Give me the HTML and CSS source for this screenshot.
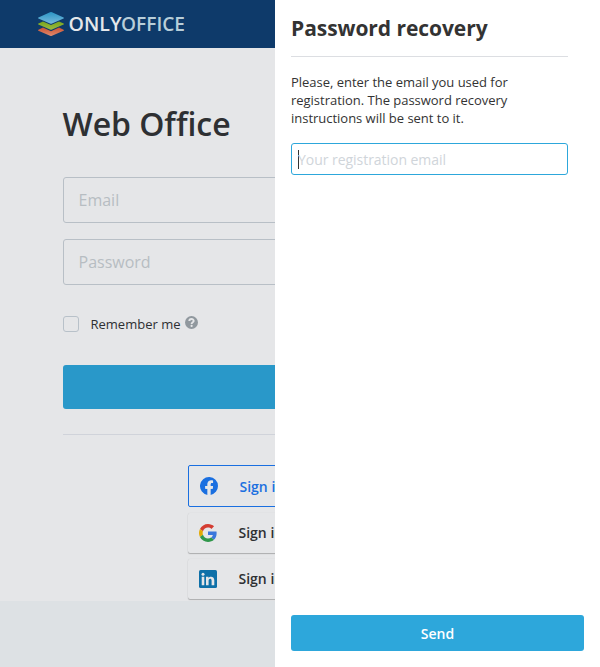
FILE: index.html
```html
<!DOCTYPE html>
<html lang="en">
<head>
<meta charset="utf-8">
<title>Web Office</title>
<link rel="stylesheet" href="styles.css">
</head>
<body>
<div class="app">
  <div class="page">
    <header class="header">
      <svg class="logo" width="150" height="28" viewBox="0 0 150 28">
        <defs>
          <linearGradient id="blue" x1="0" y1="0" x2="0" y2="1"><stop offset="0" stop-color="#2b95c5"/><stop offset="1" stop-color="#78bbdc"/></linearGradient>
          <linearGradient id="green" x1="0" y1="0" x2="0" y2="1"><stop offset="0" stop-color="#78a51d"/><stop offset="1" stop-color="#9dbb42"/></linearGradient>
          <linearGradient id="red" x1="0" y1="0" x2="0" y2="1"><stop offset="0" stop-color="#cc5332"/><stop offset="1" stop-color="#df8b70"/></linearGradient>
        </defs>
        <path fill="url(#red)" d="M1.4 19.7 6 17.600l8 3.700 8-3.700 4.600 2.100q.8.500 0 1L15 25.800q-1 .5-2 0L1.400 20.700q-.8-.5 0-1z"/>
        <path fill="url(#green)" d="M1.400 13.500 6 11.400l8 3.700 8-3.700 4.600 2.100q.8.500 0 1L15 19.600q-1 .5-2 0L1.400 14.500q-.8-.5 0-1z"/>
        <path fill="url(#blue)" d="M1.400 7.400 13 2.300q1-.5 2 0l11.600 5.100q.8.500 0 1L15 13.500q-1 .5-2 0L1.400 8.400q-.8-.5 0-1z"/>
        <text class="logo-only" x="31.500" y="21.300" textLength="53" lengthAdjust="spacingAndGlyphs">ONLY</text>
        <text class="logo-office" x="84" y="21.300" textLength="64" lengthAdjust="spacingAndGlyphs">OFFICE</text>
      </svg>
    </header>
    <main class="login">
      <h1 class="title">Web Office</h1>
      <div class="field">Email</div>
      <div class="field">Password</div>
      <div class="remember">
        <span class="checkbox"></span>
        <span>Remember me</span>
        <svg class="help" width="13" height="13" viewBox="0 0 13 13"><circle cx="6.500" cy="6.500" r="6.500" fill="#90989e"/><path d="M4.300 5.100C4.300 2.300 8.700 2.400 8.700 4.900 8.700 6.300 6.600 6.200 6.600 7.900" fill="none" stroke="#e5e6e8" stroke-width="1.900"/><circle cx="6.600" cy="9.900" r="1.100" fill="#e5e6e8"/></svg>
      </div>
      <div class="signin"></div>
      <div class="socials">
        <div class="social facebook">
          <svg width="18" height="18" viewBox="0 0 24 24"><path fill="#1a6fe0" d="M24 12a12 12 0 1 0-13.900 11.900v-8.400H7.100V12h3V9.400c0-3 1.800-4.700 4.600-4.700 1.300 0 2.700.2 2.700.2v3h-1.500c-1.500 0-2 .9-2 1.900V12h3.400l-.5 3.500h-2.900v8.400A12 12 0 0 0 24 12z"/><path fill="#e5e6e8" d="m16.800 15.500.5-3.500h-3.400V9.800c0-1 .5-1.900 2-1.900h1.500v-3s-1.400-.2-2.700-.2c-2.800 0-4.600 1.700-4.600 4.700V12h-3v3.500h3v8.400a12 12 0 0 0 3.800 0v-8.400z"/></svg>
          <span>Sign in with Facebook</span>
        </div>
        <div class="social">
          <svg width="18" height="18" viewBox="0 0 48 48"><path fill="#d43d32" d="M24 9.500c3.540 0 6.710 1.220 9.210 3.600l6.850-6.850C35.900 2.380 30.470 0 24 0 14.620 0 6.510 5.380 2.560 13.220l7.980 6.190C12.430 13.720 17.740 9.500 24 9.500z"/><path fill="#3b77dc" d="M46.980 24.550c0-1.570-.15-3.090-.38-4.550H24v9.020h12.940c-.58 2.960-2.260 5.480-4.780 7.180l7.730 6c4.510-4.180 7.090-10.360 7.090-17.650z"/><path fill="#e2a904" d="M10.530 28.590c-.48-1.450-.76-2.990-.76-4.590s.27-3.140.76-4.590l-7.980-6.190C.92 16.460 0 20.120 0 24s.92 7.540 2.560 10.780l7.970-6.190z"/><path fill="#2f974b" d="M24 48c6.480 0 11.930-2.130 15.890-5.810l-7.730-6c-2.150 1.450-4.920 2.300-8.160 2.300-6.260 0-11.570-4.220-13.470-9.910l-7.980 6.190C6.510 42.620 14.620 48 24 48z"/></svg>
          <span>Sign in with Google</span>
        </div>
        <div class="social">
          <svg width="18" height="18" viewBox="0 0 18 18"><rect width="18" height="18" rx="1.500" fill="#0e70a8"/><path fill="#e5e6e8" d="M2.700 6.800h2.600v8.500H2.700zM7 6.800h2.500V8c1-2 5.800-2.100 5.800 2.200v5.100h-2.700v-4.500c0-2.700-3-2.500-3 0v4.500H7z"/><circle cx="4" cy="4.200" r="1.500" fill="#e5e6e8"/></svg>
          <span>Sign in with LinkedIn</span>
        </div>
      </div>
    </main>
  </div>
  <aside class="panel">
    <h2 class="panel-title">Password recovery</h2>
    <p class="panel-text">Please, enter the email you used for registration. The password recovery instructions will be sent to it.</p>
    <div class="email"><span class="caret"></span><span>Your registration email</span></div>
    <button class="send">Send</button>
  </aside>
</div>
</body>
</html>
```
FILE: styles.css
```css
* { box-sizing: border-box; }
body { margin: 0; font-family: "Open Sans", sans-serif; color: #333; }
.app { display: flex; height: 667px; overflow: hidden; }
.page { width: 275px; flex: none; overflow: hidden; background: #dde1e4; }
.header { height: 48px; background: #0e3a6a; padding: 10px 0 0 37px; }
.logo { display: block; }
.logo-only, .logo-office { font-size: 20px; font-weight: 600; }
.logo-only { fill: #e5e8eb; }
.logo-office { fill: #b8ced9; }
.login { width: 600px; height: 553px; padding: 54px 63px 0; background: #e5e6e8; overflow: hidden; }
.title { margin: 0 0 31px -0.5px; font-size: 32px; line-height: 44px; font-weight: 600; letter-spacing: -0.05px; color: #2e3033; }
.field { height: 46px; margin-bottom: 16px; border: 1px solid #b8bfc6; border-radius: 3px; padding: 0 14.5px; font-size: 16px; line-height: 44px; color: #b7bdc2; }
.remember { display: flex; align-items: center; height: 18px; margin-top: 30px; font-size: 13px; color: #2e3033; }
.checkbox { width: 16px; height: 16px; margin-right: 11.5px; border: 1px solid #b8c1c9; border-radius: 3px; }
.help { margin: -3px 0 0 4.5px; }
.signin { height: 44px; margin-top: 32px; border-radius: 3px; background: #2998c9; }
.socials { margin-top: 25px; padding: 30px 0 0 125px; border-top: 1px solid #d0d3da; }
.social { display: flex; align-items: center; width: 224px; height: 40px; margin-bottom: 6px; padding-left: 11px; gap: 21.5px; border-radius: 2px; font-size: 14px; font-weight: 600; color: #2e3033; white-space: nowrap; box-shadow: 0 1px 1px rgba(0,0,0,.24), 0 0 1px rgba(0,0,0,.12); }
.social span { padding-bottom: 2px; }
.social.facebook { height: 42px; border: 1px solid #1a6fe0; color: #1a6fe0; box-shadow: none; }
.social.facebook span { padding-bottom: 0; }
.panel { display: flex; flex-direction: column; flex: 1; padding: 0 16px 16px; background: #fff; }
.panel-title { width: 277px; height: 57px; margin: 0; border-bottom: 1px solid #dcdee2; font-size: 21px; line-height: 56px; font-weight: 700; letter-spacing: -0.06px; }
.panel-text { width: 277px; margin: 16px 0; font-size: 13px; line-height: 18px; letter-spacing: -0.02px; }
.email { display: flex; align-items: center; width: 277px; height: 32px; border: 1px solid #2da7db; border-radius: 3px; padding-left: 6px; font-size: 14px; letter-spacing: -0.04px; color: #d0d5da; }
.caret { width: 1px; height: 19px; margin-right: -1px; background: #333; }
.send { height: 36px; margin-top: auto; border: 0; border-radius: 3px; background: #2da7db; color: #fff; font: 600 14px "Open Sans", sans-serif; }
```
